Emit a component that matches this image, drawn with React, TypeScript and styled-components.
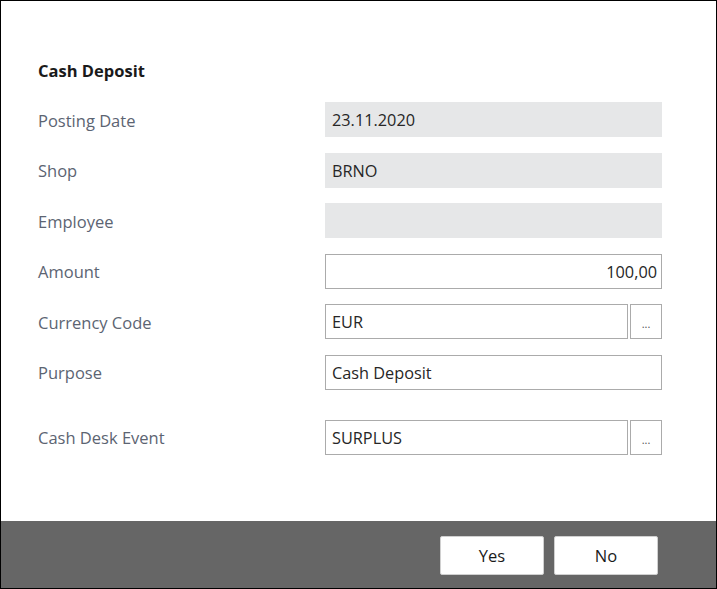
import React from 'react';
import styled, { createGlobalStyle } from 'styled-components';

const GlobalStyle = createGlobalStyle`
  html, body {
    margin: 0;
    padding: 0;
    background: #fff;
  }
  body {
    font-family: "Open Sans", "Noto Sans", "Liberation Sans", sans-serif;
  }
`;

const Window = styled.div`
  width: 717px;
  height: 589px;
  box-sizing: border-box;
  border: 1px solid #000;
  display: flex;
  flex-direction: column;
  background: #fff;
`;

const Body = styled.div`
  flex: 1;
  padding: 60px 54px 0 37px;
  display: flex;
  flex-direction: column;
`;

const Title = styled.h2`
  margin: 0 0 21px;
  font-size: 16.5px;
  line-height: 20px;
  font-weight: 700;
  color: #1a1a1a;
`;

const Form = styled.div`
  display: flex;
  flex-direction: column;
  gap: 15.5px;
`;

const Row = styled.div<{ $spaced?: boolean }>`
  display: grid;
  grid-template-columns: 287px 337px;
  align-items: center;
  height: 35px;
  margin-top: ${p => (p.$spaced ? '14.5px' : '0')};
`;

const Label = styled.label`
  font-size: 16.5px;
  color: #5c6472;
  padding-top: 1px;
`;

const FieldGroup = styled.div`
  display: flex;
  gap: 2px;
  height: 100%;
`;

const Field = styled.div<{ $readOnly?: boolean; $align?: 'left' | 'right' }>`
  flex: 1;
  box-sizing: border-box;
  height: 100%;
  display: flex;
  align-items: center;
  justify-content: ${p => (p.$align === 'right' ? 'flex-end' : 'flex-start')};
  padding: 1px 4px 0 6px;
  font-size: 16.3px;
  color: #262626;
  background: ${p => (p.$readOnly ? '#e6e7e8' : '#fff')};
  border: 1px solid ${p => (p.$readOnly ? '#e6e7e8' : '#ababab')};
`;

const LookupButton = styled.button`
  width: 32px;
  height: 100%;
  box-sizing: border-box;
  border: 1px solid #ababab;
  background: #fff;
  color: #555;
  font-family: inherit;
  font-size: 11px;
  padding: 4px 0 0;
  cursor: pointer;
`;

const Footer = styled.div`
  height: 67px;
  background: #666;
  display: flex;
  justify-content: flex-end;
  align-items: center;
  gap: 10px;
  padding: 0 58px 0 0;
  box-sizing: border-box;
`;

const DialogButton = styled.button`
  width: 104px;
  height: 39px;
  background: #fff;
  border: 1px solid #d0d0d0;
  border-radius: 2px;
  font-family: inherit;
  font-size: 16.5px;
  color: #1a1a1a;
  cursor: pointer;
  margin-top: 2px;
`;

type FieldDef = {
  label: string;
  value: string;
  readOnly?: boolean;
  align?: 'left' | 'right';
  lookup?: boolean;
  spaced?: boolean;
};

const fields: FieldDef[] = [
  { label: 'Posting Date', value: '23.11.2020', readOnly: true },
  { label: 'Shop', value: 'BRNO', readOnly: true },
  { label: 'Employee', value: '', readOnly: true },
  { label: 'Amount', value: '100,00', align: 'right' },
  { label: 'Currency Code', value: 'EUR', lookup: true },
  { label: 'Purpose', value: 'Cash Deposit' },
  { label: 'Cash Desk Event', value: 'SURPLUS', lookup: true, spaced: true },
];

const App = () => {
  return (
    <>
      <GlobalStyle />
      <Window>
        <Body>
          <Title>Cash Deposit</Title>
          <Form>
            {fields.map(f => (
              <Row key={f.label} $spaced={f.spaced}>
                <Label>{f.label}</Label>
                <FieldGroup>
                  <Field $readOnly={f.readOnly} $align={f.align}>{f.value}</Field>
                  {f.lookup && <LookupButton>...</LookupButton>}
                </FieldGroup>
              </Row>
            ))}
          </Form>
        </Body>
        <Footer>
          <DialogButton>Yes</DialogButton>
          <DialogButton>No</DialogButton>
        </Footer>
      </Window>
    </>
  );
};

export default App;
